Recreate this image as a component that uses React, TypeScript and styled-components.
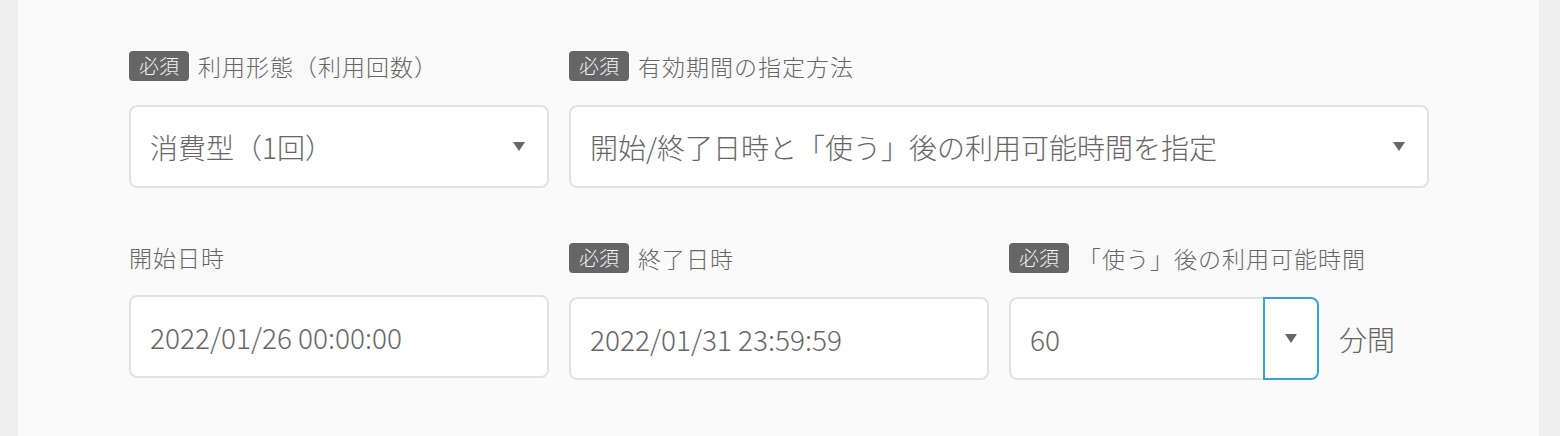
import React from "react";
import styled, { createGlobalStyle } from "styled-components";

const Global = createGlobalStyle`
  html, body { margin: 0; padding: 0; background: #efefef; }
  body { font-family: "Noto Sans CJK JP", "Noto Sans", sans-serif; color: #666; font-weight: 300; }
`;

const Page = styled.div`
  display: flex;
  height: 436px;
  background: #efefef;
`;

const Panel = styled.div`
  margin-left: 18px;
  width: 1521px;
  background: #fafafa;
  padding: 51px 0 0 111px;
  box-sizing: border-box;
`;

const Grid = styled.div`
  display: grid;
  grid-template-columns: repeat(3, 420px);
  column-gap: 20px;
  row-gap: 55px;
  align-items: start;
`;

const Field = styled.div<{ $span?: number }>`
  display: flex;
  flex-direction: column;
  gap: 24px;
  grid-column: span ${(p) => p.$span ?? 1};
`;

const Label = styled.div`
  display: flex;
  align-items: center;
  gap: 9px;
  font-size: 23px;
  line-height: 28px;
  color: #666;
  letter-spacing: 1px;
  font-weight: 300;
`;

const Badge = styled.span`
  display: inline-flex;
  align-items: center;
  justify-content: center;
  width: 60px;
  height: 30px;
  border-radius: 4px;
  background: #666;
  color: #f4f4f4;
  font-size: 20px;
  letter-spacing: 0;
  font-weight: 300;
`;

const Box = styled.div`
  display: flex;
  align-items: center;
  justify-content: space-between;
  height: 83px;
  box-sizing: border-box;
  padding: 0 22px 0 19px;
  background: #fff;
  border: 2px solid #dfe3e8;
  border-radius: 8px;
  font-size: 28px;
  font-weight: 300;
  color: #666;
`;

const Caret = styled.span`
  width: 0;
  height: 0;
  border-left: 6px solid transparent;
  border-right: 6px solid transparent;
  border-top: 9px solid #666;
`;

const Row = styled.div`
  display: flex;
  align-items: center;
  gap: 20px;
`;

const NumBox = styled.div`
  display: flex;
  width: 310px;
  height: 83px;
`;

const NumInput = styled.div`
  flex: 1;
  display: flex;
  align-items: center;
  padding-left: 19px;
  background: #fff;
  border: 2px solid #dfe3e8;
  border-right: none;
  border-radius: 8px 0 0 8px;
  font-size: 28px;
  font-weight: 300;
  color: #666;
`;

const NumButton = styled.div`
  width: 56px;
  box-sizing: border-box;
  display: flex;
  align-items: center;
  justify-content: center;
  background: #fff;
  border: 2px solid #3aa1d8;
  border-radius: 0 8px 8px 0;
`;

const Unit = styled.span`
  font-size: 28px;
  font-weight: 300;
  color: #666;
`;

export default function App() {
  return (
    <>
      <Global />
      <Page>
        <Panel>
          <Grid>
            <Field>
              <Label>
                <Badge>必須</Badge>利用形態（利用回数）
              </Label>
              <Box>
                消費型（1回）<Caret />
              </Box>
            </Field>
            <Field $span={2}>
              <Label>
                <Badge>必須</Badge>有効期間の指定方法
              </Label>
              <Box>
                開始/終了日時と「使う」後の利用可能時間を指定<Caret />
              </Box>
            </Field>
            <Field>
              <Label>開始日時</Label>
              <Box>2022/01/26 00:00:00</Box>
            </Field>
            <Field>
              <Label>
                <Badge>必須</Badge>終了日時
              </Label>
              <Box>2022/01/31 23:59:59</Box>
            </Field>
            <Field>
              <Label>
                <Badge>必須</Badge>「使う」後の利用可能時間
              </Label>
              <Row>
                <NumBox>
                  <NumInput>60</NumInput>
                  <NumButton>
                    <Caret />
                  </NumButton>
                </NumBox>
                <Unit>分間</Unit>
              </Row>
            </Field>
          </Grid>
        </Panel>
      </Page>
    </>
  );
}
